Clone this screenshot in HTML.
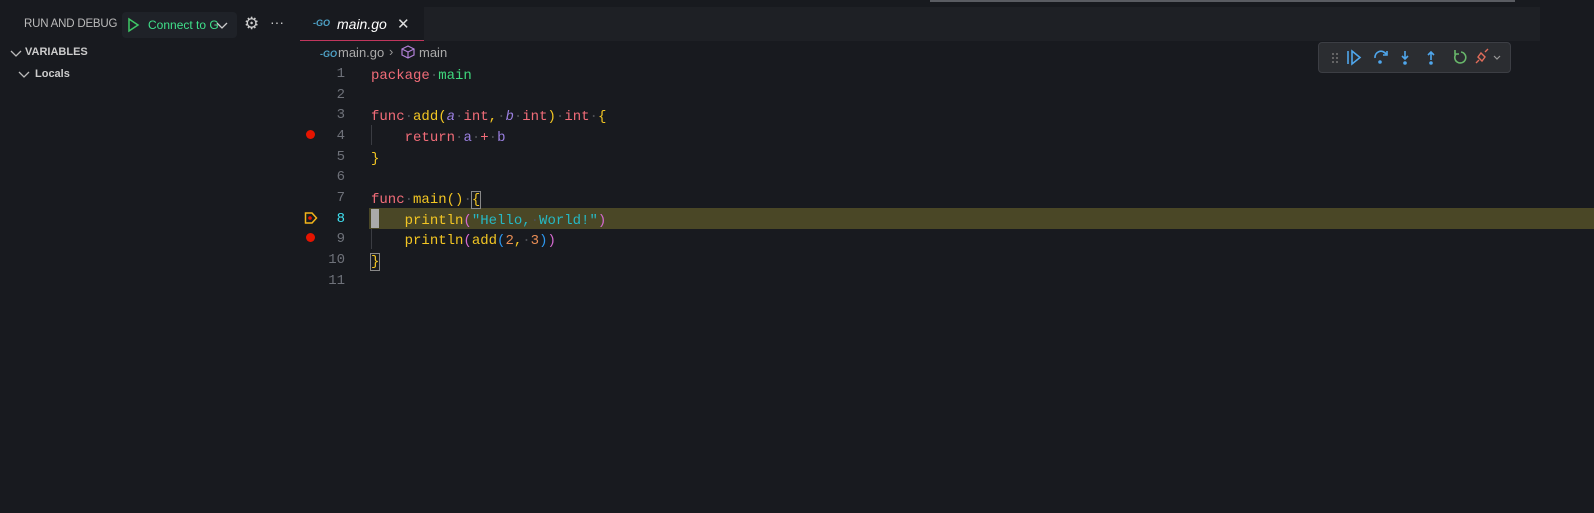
<!DOCTYPE html><html><head><style>
body{margin:0;width:1594px;height:513px;background:#181a1f;font-family:"Liberation Sans",sans-serif;position:relative;overflow:hidden;color:#ccc}
.a{position:absolute}
.code{font-family:"Liberation Mono",monospace;font-size:14px;white-space:pre}
.ln{position:absolute;width:44px;text-align:right;left:301px;font-family:"Liberation Mono",monospace;font-size:14px;color:#6e7179}
.k{color:#f16c78}.f{color:#f3c623}.v{color:#9a7fe0}.g{color:#3fd77c}.s{color:#26b8c4}.n{color:#e88d55}.p{color:#d56ad0}.b{color:#2d98f0}.d{color:#4c4e54}
</style></head><body>
<div class="a" style="left:930px;top:0;width:585px;height:2px;background:#5a5c62"></div>
<div class="a" style="left:300px;top:7px;width:1240px;height:34px;background:#1e2025"></div>
<div class="a" style="left:300px;top:7px;width:124px;height:34px;background:#181a1f;border-bottom:1px solid #c0365d;box-sizing:border-box"></div>
<div class="a" style="left:313px;top:18px;font-size:9px;font-weight:bold;font-style:italic;color:#4fa3c8">-GO</div>
<div class="a" style="left:337px;top:16px;font-size:14px;font-style:italic;color:#fff">main.go</div>
<div class="a" style="left:397px;top:15px;font-size:15px;color:#ddd">✕</div>
<div class="a" style="left:24px;top:18px;font-size:11.5px;color:#bbb;letter-spacing:-0.2px">RUN AND DEBUG</div>
<div class="a" style="left:122px;top:12px;width:115px;height:26px;background:#1f2228;border-radius:4px"></div>
<svg class="a" style="left:126px;top:17px" width="14" height="16"><path d="M3 2L12 8L3 14Z" fill="none" stroke="#3fc766" stroke-width="1.5"/></svg>
<div class="a" style="left:148px;top:18px;font-size:12px;color:#3fe08a">Connect to G</div>
<svg class="a" style="left:216px;top:20px" width="12" height="10"><path d="M1 3L6 8L11 3" stroke="#ccc" stroke-width="1.3" fill="none"/></svg>
<div class="a" style="left:244px;top:14px;font-size:17px;color:#ccc">⚙</div>
<div class="a" style="left:270px;top:14px;font-size:14px;color:#ccc">···</div>
<svg class="a" style="left:10px;top:48px" width="12" height="10"><path d="M1 3L6 8L11 3" stroke="#bbb" stroke-width="1.3" fill="none"/></svg>
<div class="a" style="left:25px;top:46px;font-size:11px;font-weight:bold;color:#ccc">VARIABLES</div>
<svg class="a" style="left:18px;top:69px" width="12" height="10"><path d="M1 3L6 8L11 3" stroke="#bbb" stroke-width="1.3" fill="none"/></svg>
<div class="a" style="left:35px;top:68px;font-size:11px;font-weight:bold;color:#ccc">Locals</div>
<div class="a" style="left:320px;top:49px;font-size:9px;font-weight:bold;font-style:italic;color:#4fa3c8">-GO</div>
<div class="a" style="left:338px;top:45px;font-size:13px;color:#aaa">main.go</div>
<div class="a" style="left:389px;top:44px;font-size:13px;color:#999">›</div>
<svg class="a" style="left:401px;top:45px" width="14" height="14"><path d="M7 1L13 4V10L7 13L1 10V4Z M1 4L7 7L13 4M7 7V13" fill="none" stroke="#b180d7" stroke-width="1.2"/></svg>
<div class="a" style="left:419px;top:45px;font-size:13px;color:#aaa">main</div>
<div class="a" style="left:369px;top:208px;width:1225px;height:21px;background:#4a4726"></div>
<div class="a" style="left:371px;top:209px;width:8px;height:19px;background:#aaa"></div>
<div class="a" style="left:371px;top:125px;height:20px;border-left:1px solid #3a3c42"></div>
<div class="a" style="left:371px;top:229px;height:20px;border-left:1px solid #3a3c42"></div>
<div class="a" style="left:306px;top:130px;width:9px;height:9px;border-radius:50%;background:#e51400"></div>
<div class="a" style="left:306px;top:233px;width:9px;height:9px;border-radius:50%;background:#e51400"></div>
<svg class="a" style="left:304px;top:211px" width="14" height="14"><path d="M1.5 2H8L12.5 7L8 12H1.5Z" fill="none" stroke="#f3b51a" stroke-width="1.5"/><circle cx="6" cy="7" r="1.8" fill="#e51400"/></svg>
<div class="ln" style="top:66px">1</div><div class="ln" style="top:87px">2</div><div class="ln" style="top:107px">3</div><div class="ln" style="top:128px">4</div><div class="ln" style="top:149px">5</div><div class="ln" style="top:169px">6</div><div class="ln" style="top:190px">7</div><div class="ln" style="top:211px;color:#3fe0f0">8</div><div class="ln" style="top:231px">9</div><div class="ln" style="top:252px">10</div><div class="ln" style="top:273px">11</div>
<div class="a code" style="left:371px;top:66px;line-height:20.65px"><span class="k">package</span><span class="d">·</span><span class="g">main</span>

<span class="k">func</span><span class="d">·</span><span class="f">add(</span><span class="v"><i>a</i></span><span class="d">·</span><span class="k">int</span><span class="f">,</span><span class="d">·</span><span class="v"><i>b</i></span><span class="d">·</span><span class="k">int</span><span class="f">)</span><span class="d">·</span><span class="k">int</span><span class="d">·</span><span class="f">{</span>
    <span class="k">return</span><span class="d">·</span><span class="v">a</span><span class="d">·</span><span class="k">+</span><span class="d">·</span><span class="v">b</span>
<span class="f">}</span>

<span class="k">func</span><span class="d">·</span><span class="f">main()</span><span class="d">·</span><span class="f" style="outline:1px solid #888">{</span>
    <span class="f">println</span><span class="p">(</span><span class="s">"Hello,</span><span class="d">·</span><span class="s">World!"</span><span class="p">)</span>
    <span class="f">println</span><span class="p">(</span><span class="f">add</span><span class="b">(</span><span class="n">2</span><span class="f">,</span><span class="d">·</span><span class="n">3</span><span class="b">)</span><span class="p">)</span>
<span class="f" style="outline:1px solid #888">}</span>
</div>
<div class="a" style="left:1318px;top:42px;width:193px;height:31px;background:#2b2d31;border:1px solid #3c3e44;border-radius:4px;box-sizing:border-box"></div>
<svg class="a" style="left:1318px;top:42px" width="193" height="31">
<g fill="#777"><circle cx="15" cy="12" r="1"/><circle cx="19" cy="12" r="1"/><circle cx="15" cy="16" r="1"/><circle cx="19" cy="16" r="1"/><circle cx="15" cy="20" r="1"/><circle cx="19" cy="20" r="1"/></g>
<g stroke="#4fa6ec" stroke-width="1.6" fill="none"><path d="M30 9V22M34 9L42 15.5L34 22Z"/><path d="M57 16A6 6 0 0 1 68 12M69 9V13H65"/><path d="M87 9V17M84 14L87 17L90 14"/><path d="M113 10V18M110 13L113 10L116 13"/></g>
<g fill="#4fa6ec"><circle cx="62" cy="20" r="1.8"/><circle cx="87" cy="21" r="1.8"/><circle cx="113" cy="21" r="1.8"/></g>
<path d="M138 12A5.5 5.5 0 1 0 143 10M137 8V12H141" stroke="#68b66a" stroke-width="1.6" fill="none"/>
<path d="M158 21L161 18M163 11L167 15L164 19L160 15ZM167 10L170 7" stroke="#e06c5a" stroke-width="1.4" fill="none"/>
<path d="M176 14L179 17L182 14" stroke="#999" stroke-width="1.2" fill="none"/>
</svg>
</body></html>
